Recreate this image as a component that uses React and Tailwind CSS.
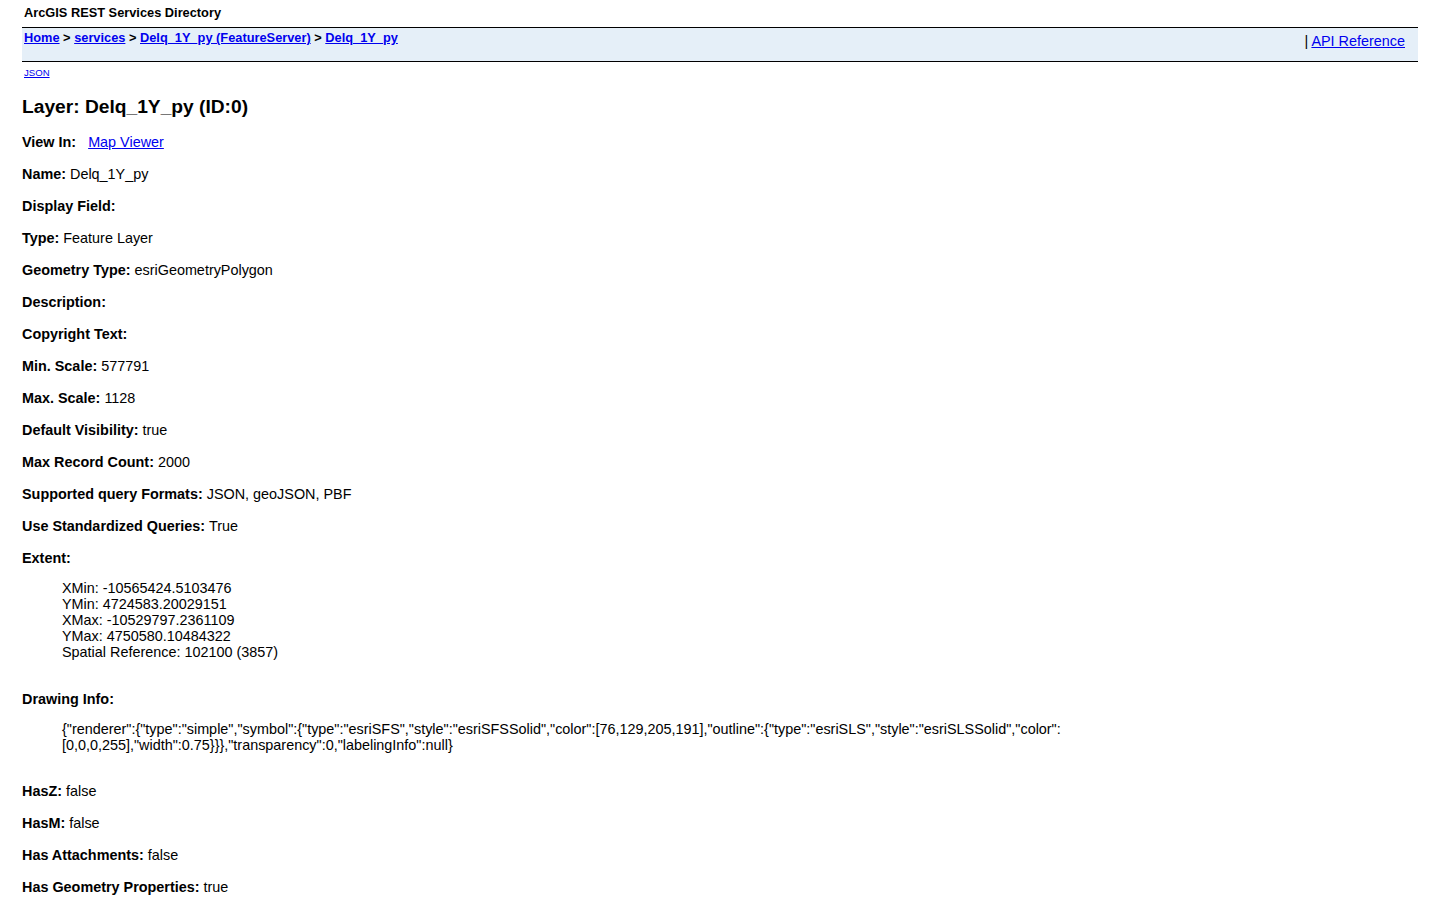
import React from "react";

const font = { fontFamily: '"Liberation Sans", Arial, sans-serif' };

function Row({ label, value, children, className = "mb-[16px]" }) {
  return (
    <div className={"text-[14.4px] leading-[16px] " + className}>
      <b>{label}</b>
      {value !== undefined ? " " + value : ""}
      {children}
    </div>
  );
}

export default function App() {
  const link = "text-[#0000ee] underline";
  return (
    <div className="min-h-[900px] bg-white text-black px-[22px]" style={font}>
      <div className="pt-[5px] text-[12.8px] leading-[16px] font-bold pl-[2px]">ArcGIS REST Services Directory</div>
      <div className="mt-[6px] h-[35px] border-t border-b border-black bg-[#e5eff8] flex justify-between">
        <div className="pt-[2px] pl-[2px] text-[12.8px] leading-[16px] font-bold">
          <a className={link} href="#">Home</a> &gt; <a className={link} href="#">services</a> &gt;{" "}
          <a className={link} href="#">Delq_1Y_py (FeatureServer)</a> &gt; <a className={link} href="#">Delq_1Y_py</a>
        </div>
        <div className="pt-[5px] pr-[13px] text-[14.4px] leading-[16px]">
          | <a className={link} href="#">API Reference</a>
        </div>
      </div>
      <div className="mt-[5px] pl-[2px] text-[9.6px] leading-[12px]">
        <a className={link} href="#">JSON</a>
      </div>
      <h2 className="mt-[17px] mb-[16px] text-[19.2px] leading-[22px] font-bold">Layer: Delq_1Y_py (ID:0)</h2>
      <Row label="View In:">
        <a className={link + " ml-[12px]"} href="#">Map Viewer</a>
      </Row>
      <Row label="Name:" value="Delq_1Y_py" />
      <Row label="Display Field:" />
      <Row label="Type:" value="Feature Layer" />
      <Row label="Geometry Type:" value="esriGeometryPolygon" />
      <Row label="Description:" />
      <Row label="Copyright Text:" />
      <Row label="Min. Scale:" value="577791" />
      <Row label="Max. Scale:" value="1128" />
      <Row label="Default Visibility:" value="true" />
      <Row label="Max Record Count:" value="2000" />
      <Row label="Supported query Formats:" value="JSON, geoJSON, PBF" />
      <Row label="Use Standardized Queries:" value="True" />
      <Row label="Extent:" className="mb-[14px]" />
      <div className="pl-[40px] text-[14.4px] leading-[16px]">
        <div>XMin: -10565424.5103476</div>
        <div>YMin: 4724583.20029151</div>
        <div>XMax: -10529797.2361109</div>
        <div>YMax: 4750580.10484322</div>
        <div>Spatial Reference: 102100 (3857)</div>
      </div>
      <Row label="Drawing Info:" className="mt-[31px] mb-[14px]" />
      <div className="pl-[40px] text-[14.4px] leading-[16px]">
        {'{"renderer":{"type":"simple","symbol":{"type":"esriSFS","style":"esriSFSSolid","color":[76,129,205,191],"outline":{"type":"esriSLS","style":"esriSLSSolid","color":'}
        <br />
        {'[0,0,0,255],"width":0.75}}},"transparency":0,"labelingInfo":null}'}
      </div>
      <Row label="HasZ:" value="false" className="mt-[30px] mb-[16px]" />
      <Row label="HasM:" value="false" />
      <Row label="Has Attachments:" value="false" />
      <Row label="Has Geometry Properties:" value="true" />
    </div>
  );
}
